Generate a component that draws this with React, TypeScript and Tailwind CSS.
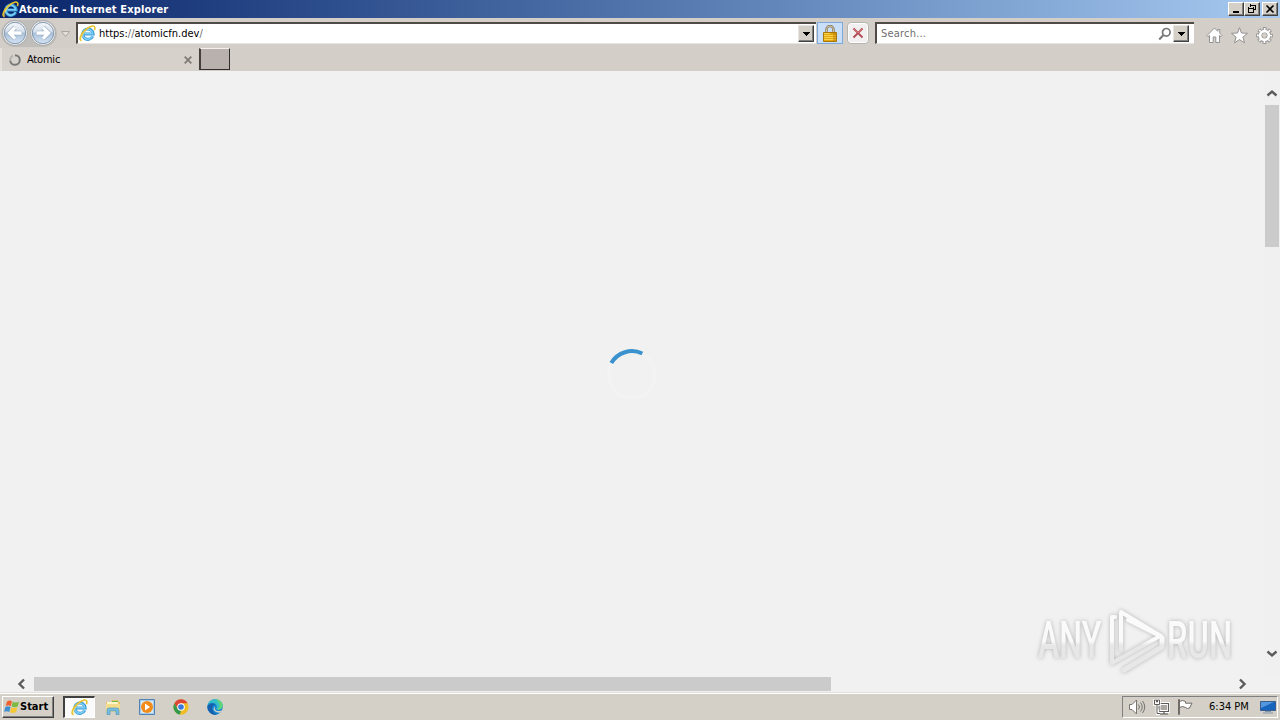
import React from 'react';
import clsx from 'clsx';

interface IconProps {
  size?: number;
}

const IeLogo: React.FC<IconProps> = ({ size = 16 }) => (
  <svg width={size} height={size} viewBox="0 0 16 16" fill="none" className="shrink-0">
    <path d="M12.9 10.6A4.9 4.9 0 1 1 13.3 8.5H5" stroke="#3b9ad6" strokeWidth="2.9" />
    <path d="M12.6 10.4A4.7 4.7 0 1 1 12.9 8.2H5" stroke="#7dd0f5" strokeWidth="1.4" />
    <path d="M2.4 14.9C-.6 14.3 1.5 8.5 6.2 4.4 10.3.8 14.4-.1 14.9 2.2c.2.8 0 1.7-.4 2.6" stroke="#e9c22d" strokeWidth="1.5" />
    <path d="M3 14.2C1.3 12.8 3.4 8.3 7 5" stroke="#ffe476" strokeWidth=".6" />
  </svg>
);

const NavArrow = ({ forward = false }: { forward?: boolean }) => (
  <svg width="28" height="26" viewBox="0 0 28 26" className={clsx('shrink-0', forward && '-scale-x-100')}>
    <defs>
      <linearGradient id="orb" x1="0" y1="0" x2="0" y2="1">
        <stop offset="0" stopColor="#f4f7fa" />
        <stop offset=".45" stopColor="#d5dfeb" />
        <stop offset=".5" stopColor="#a9bfd8" />
        <stop offset="1" stopColor="#d5e5f5" />
      </linearGradient>
    </defs>
    <circle cx="14" cy="13" r="12.5" fill="#f0f1f2" stroke="#a8a8a8" />
    <circle cx="14" cy="13" r="10.7" fill="url(#orb)" stroke="#8296ad" />
    <path d="M20.5 13H9M14 7.5 8.5 13l5.5 5.5" fill="none" stroke="#8fa5bf" strokeWidth="4.6" />
    <path d="M20.5 13H9M14 7.5 8.5 13l5.5 5.5" fill="none" stroke="#fff" strokeWidth="3.4" />
  </svg>
);

const LockIcon = () => (
  <svg width="14" height="17" viewBox="0 0 14 17">
    <path d="M3.5 8V4.5a3.5 3.5 0 0 1 7 0V8" fill="none" stroke="#85775c" strokeWidth="2.4" />
    <path d="M3.5 8V4.5a3.5 3.5 0 0 1 7 0V8" fill="none" stroke="#d4c7a2" strokeWidth="1" />
    <path d="M.5 7.5h13v9H.5z" fill="#e4a70f" stroke="#a97808" />
    <path d="M1 8.5h6M1 10.5h12M1 12.5h12M1 14.5h12" stroke="#f6d24d" />
    <path d="M10 8h3v8h-3z" fill="#bd8104" opacity=".5" />
  </svg>
);

const DropButton = () => (
  <div className="flex h-[17px] w-4 shrink-0 items-center justify-center border border-t-[#e8e5e0] border-l-[#e8e5e0] border-r-[#404040] border-b-[#404040] bg-[#d4d0c8] shadow-[inset_-1px_-1px_0_#808080]">
    <svg width="7" height="4" viewBox="0 0 7 4" shapeRendering="crispEdges">
      <path d="M0 0h7L3.5 4z" />
    </svg>
  </div>
);

const WindowButton = ({ children }: { children: React.ReactNode }) => (
  <div className="flex h-[14px] w-4 items-center justify-center border border-t-white border-l-white border-r-[#404040] border-b-[#404040] bg-[#d4d0c8] shadow-[inset_-1px_-1px_0_#808080]">
    <svg width="12" height="10" viewBox="0 0 12 10" fill="none" stroke="#000" shapeRendering="crispEdges">
      {children}
    </svg>
  </div>
);

const TitleBar = () => (
  <header className="flex h-[18px] items-center bg-linear-to-r from-[#0a246a] to-[#a6caf0] pl-0.5 pr-0.5">
    <IeLogo size={17} />
    <span className="flex-1 pt-px text-[11px] leading-[17px] font-bold tracking-[0.14px] text-white">
      Atomic - Internet Explorer
    </span>
    <div className="flex">
      <WindowButton><path d="M3 8h6" strokeWidth="2" /></WindowButton>
      <WindowButton><path d="M4 1h6M4.5 0v3M9.5 1v5M8 5.5h2M2 4h6M2.5 3v6M7.5 3v6M2 8.5h6" /></WindowButton>
      <div className="ml-0.5">
        <WindowButton><path d="m2.5 1.5 7 7m0-7-7 7" strokeWidth="1.6" shapeRendering="auto" /></WindowButton>
      </div>
    </div>
  </header>
);

const Toolbar = () => (
  <div className="flex h-[30px] items-start pt-0.5 pl-px">
    <div className="flex h-[27px] rounded-full bg-[#c0bebb]">
      <NavArrow />
      <NavArrow forward />
    </div>
    <svg width="9" height="6" viewBox="0 0 9 6" className="mt-[11px] ml-1">
      <path d="M.5.5h8l-4 5z" fill="#e4e1dd" stroke="#aaa6a2" />
    </svg>
    <div className="mt-0.5 ml-[6px] flex h-[22px] w-[740px] items-center border-t-2 border-l-2 border-b border-t-[#504b46] border-l-[#504b46] border-b-[#e8e5e0] bg-white pr-0.5 pl-px">
      <IeLogo size={17} />
      <span className="ml-[3px] flex-1 pt-0.5 text-[11px] text-black">
        https:<span className="text-[#6d6d6d]">//</span>atomicfn.dev<span className="text-[#6d6d6d]">/</span>
      </span>
      <DropButton />
    </div>
    <div className="mt-0.5 ml-px flex h-[22px] w-[26px] items-center justify-center border border-[#7da9dc] bg-[#c9def7]">
      <LockIcon />
    </div>
    <div className="mt-0.5 ml-1 flex h-[22px] w-[22px] items-center justify-center rounded-sm border border-[#b8b4b0] bg-[#f1eff0] shadow-[inset_0_0_0_1px_#fff]">
      <svg width="12" height="12" viewBox="0 0 12 12" fill="none">
        <path d="m1.5 1.5 9 9m0-9-9 9" stroke="#b14a52" strokeWidth="1.8" />
        <path d="m1.5 1.5 4.5 4.5 4.5-4.5" stroke="#df7982" strokeWidth=".8" />
      </svg>
    </div>
    <div className="mt-0.5 ml-[6px] flex h-[22px] w-[319px] items-center border-t-2 border-l-2 border-b border-t-[#504b46] border-l-[#504b46] border-b-[#e8e5e0] bg-white pr-[5px] pl-1">
      <span className="flex-1 pt-0.5 text-[11px] tracking-[0.2px] text-[#707070]">Search...</span>
      <svg width="14" height="14" viewBox="0 0 14 14" fill="none" stroke="#777" className="mr-px">
        <circle cx="8.3" cy="5.3" r="3.8" strokeWidth="1.7" />
        <path d="m5.5 8-4.3 4.5" strokeWidth="2" />
      </svg>
      <DropButton />
    </div>
    <div className="mt-[7px] ml-3 flex gap-2 text-[#939191]">
      <svg width="17" height="17" viewBox="0 0 17 17" fill="#fff" stroke="currentColor">
        <path d="M8.5 1 1 8.5l1 1.2 1.5-1.2v7h3.7V10h2.6v5.5h3.7v-7L15 9.7l1-1.2-2.2-2.2V2.5h-2v1.8z" />
      </svg>
      <svg width="17" height="17" viewBox="0 0 17 17" fill="#fff" stroke="currentColor">
        <path d="m8.5.7 2 5.3 6 .3-4.6 3.8 1.6 5.7-5-3.2-5 3.2 1.6-5.7L.5 6.3l6-.3z" />
      </svg>
      <svg width="17" height="17" viewBox="0 0 17 17" fill="none">
        <circle cx="8.5" cy="8.5" r="6.6" stroke="currentColor" strokeWidth="3.6" strokeDasharray="3.4 1.78" strokeDashoffset="1.7" />
        <circle cx="8.5" cy="8.5" r="4.5" stroke="currentColor" strokeWidth="4.2" />
        <circle cx="8.5" cy="8.5" r="6.6" stroke="#fff" strokeWidth="2" strokeDasharray="1.8 3.38" strokeDashoffset=".9" />
        <circle cx="8.5" cy="8.5" r="4.4" stroke="#fff" strokeWidth="2.7" />
      </svg>
    </div>
  </div>
);

const TabStrip = () => (
  <div className="flex h-[23px]">
    <div className="flex h-full w-[198px] items-center border-l-2 border-[#e4e0dc] bg-[#d7d1cb] pl-[7px]">
      <svg width="12" height="12" viewBox="0 0 12 12" fill="none">
        <path d="M6 1.2A4.8 4.8 0 1 1 1.2 6.5" stroke="#777" strokeWidth="2" />
        <path d="M1.2 6A4.8 4.8 0 0 1 4 1.7" stroke="#b5b1ad" strokeWidth="2" />
      </svg>
      <span className="ml-1.5 flex-1 pt-0.5 text-[11px] tracking-[-0.2px] text-black">Atomic</span>
      <svg width="8" height="8" viewBox="0 0 8 8" className="mr-1.5">
        <path d="m.7.7 6.6 6.6m0-6.6L.7 7.3" stroke="#817b76" strokeWidth="1.8" />
      </svg>
    </div>
    <div className="ml-px h-[22px] w-[31px] border border-t-[#f3f0ed] border-l-2 border-l-[#45403d] border-r-[#302d2b] border-b-[#302d2b] bg-[#b9b1ad]" />
  </div>
);

const chevrons = {
  up: 'm1.5 6.5 4.5-4 4.5 4',
  down: 'm1.5 1.5 4.5 4 4.5-4',
  left: 'M8 1.5 3.5 6 8 10.5',
  right: 'M3 1.5 7.5 6 3 10.5',
};

const Chevron = ({ dir }: { dir: keyof typeof chevrons }) => (
  <svg
    width={dir === 'up' || dir === 'down' ? 12 : 11}
    height={dir === 'up' || dir === 'down' ? 9 : 12}
    className="shrink-0"
    fill="none"
    stroke="#5b5b5b"
    strokeWidth="2.4"
  >
    <path d={chevrons[dir]} />
  </svg>
);

const Watermark = () => (
  <svg
    width="210"
    height="74"
    viewBox="0 0 210 74"
    className="absolute right-[35px] bottom-[14px] drop-shadow-[0_0_2px_rgba(0,0,0,0.26)]"
  >
    <defs>
      <linearGradient id="mark" x1="0" y1="0" x2="0" y2="74" gradientUnits="userSpaceOnUse">
        <stop offset=".5" stopColor="#fafafa" />
        <stop offset=".56" stopColor="#e7e7e7" />
      </linearGradient>
      {/* same split as the mark, measured from the letters' baseline */}
      <linearGradient id="letters" x1="0" y1="-54" x2="0" y2="20" gradientUnits="userSpaceOnUse">
        <stop offset=".5" stopColor="#fafafa" />
        <stop offset=".56" stopColor="#e7e7e7" />
      </linearGradient>
    </defs>
    <g fill="url(#letters)" className="font-['Roboto','Liberation_Sans_Narrow',sans-serif] text-[51px] font-medium">
      <text transform="translate(3 54) scale(.63 1)">ANY</text>
      <text transform="translate(132 54) scale(.64 1)">RUN</text>
    </g>
    <g fill="none" stroke="url(#mark)" strokeWidth="4" strokeLinejoin="round" strokeLinecap="round">
      <path d="M86 46V8l40 24" />
      <path d="M80 13h-3v46l48-27-32-16" />
      <path d="m89 66 38-23v-9" strokeWidth="5" />
    </g>
  </svg>
);

const PageView = () => (
  <main className="relative flex flex-1 flex-col bg-[#f1f1f1]">
    <div className="flex flex-1">
      <div className="flex flex-1 items-center justify-center pt-0.5">
        <svg width="52" height="52" viewBox="0 0 52 52" fill="none" strokeWidth="4">
          <circle cx="26" cy="26" r="23" stroke="#f3f3f3" />
          <path d="M5.3 14A24 24 0 0 1 36.3 4.5" stroke="#3992ce" />
        </svg>
      </div>
      <div className="flex w-4 flex-col items-center bg-[#f0f0f0] pt-[18px] pb-[17px]">
        <Chevron dir="up" />
        <div className="mt-[7px] h-[142px] w-[14px] bg-[#cbcbcb]" />
        <div className="flex-1" />
        <Chevron dir="down" />
      </div>
    </div>
    <div className="flex h-[16px] items-center pr-[32px] pl-4">
      <Chevron dir="left" />
      <div className="ml-[7px] h-[14px] w-[797px] bg-[#cbcbcb]" />
      <div className="flex-1" />
      <Chevron dir="right" />
    </div>
    <Watermark />
  </main>
);

const WindowsFlag = () => (
  <svg width="16" height="16" viewBox="0 0 16 16">
    <path d="M3 2.5Q6 .5 8 2.3L6.8 7.2Q4.3 5.5 1.7 7z" fill="#ef602d" />
    <path d="M8.8 2.8q3 1.4 6.2-.2l-1.3 4.8Q10.5 9 7.6 7.5z" fill="#7cba43" />
    <path d="M1.4 8q2.7-1.5 5.1.2l-1.3 4.7Q2.8 11.5.1 12.8z" fill="#3f8fd0" />
    <path d="M7.3 8.4q3 1.4 6.1-.1l-1.3 4.8Q9 14.8 6 13.3z" fill="#f5c735" />
  </svg>
);

const FolderIcon = () => (
  <svg width="16" height="16" viewBox="0 0 16 16">
    <path d="M1 3h5l1-2h6l1 2h1v10H1z" fill="#e8c65f" />
    <path d="M2 3h11v3H2z" fill="#fff5c7" />
    <path d="M1 5h14v8H1z" fill="#f3dd8d" />
    <path d="M7 2h6v1H7z" fill="#6db55a" />
    <path d="M2 15.5V11q0-2 2-2h8q2 0 2 2v4.5h-3V12H5v3.5z" fill="#75bce0" stroke="#4a90b8" strokeWidth=".6" />
  </svg>
);

const MediaIcon = () => (
  <svg width="16" height="16" viewBox="0 0 16 16">
    <path d="M.5.5h15v15H.5z" fill="#a9cce9" stroke="#4f83b8" />
    <path d="M2 2h12v12H2z" fill="#d9e9f4" />
    <circle cx="8" cy="8" r="6" fill="#f28b18" />
    <path d="m6 4.5 5 3.5-5 3.5z" fill="#fff" />
  </svg>
);

const ChromeIcon = () => (
  <svg width="16" height="16" viewBox="0 0 16 16">
    <circle cx="8" cy="8" r="7.6" fill="#efbd24" />
    <path d="M1.4 4.2A7.6 7.6 0 0 1 14.6 4.2H8L5 10z" fill="#dd4537" />
    <path d="M1.4 4.2 4.7 10 8 12l-1 3.5A7.6 7.6 0 0 1 1.4 4.2z" fill="#34984d" />
    <path d="m6.7 15.5 4.7-6 .2 5.2q-2.3 1.2-4.9.8z" fill="#efbd24" />
    <circle cx="8" cy="8" r="3.8" fill="#fff" />
    <circle cx="8" cy="8" r="2.8" fill="#3978db" />
  </svg>
);

const EdgeIcon = () => (
  <svg width="16" height="16" viewBox="0 0 16 16">
    <circle cx="8" cy="8" r="7.7" fill="#1685cf" />
    <path d="M.5 7C1.2 2.7 4.4.3 8 .3c4.4 0 7.7 3 7.7 6.3 0 2.5-2 4.2-4.4 4.2-2 0-2.7-.7-1.8-1.7C11 7 8.5 3.8 5 3.8 3 3.8 1.5 5 .5 7z" fill="#35bfc8" />
    <path d="M8 .3c4.4 0 7.7 3 7.7 6.3 0 2.5-2 4.2-4.4 4.2l-1-.1c4-2.7 2.3-7.8-2.3-10.4z" fill="#60d47a" />
    <path d="M5.4 7.5c-1 3 .8 6.8 4.6 7.9A7.7 7.7 0 0 1 .3 8c.8-3.2 5.5-5 8.2-2-1.5-.3-2.6.4-3.1 1.5z" fill="#155fad" />
    <path d="M8 7.4c-1.4 3.8 2.8 5.7 6.4 4.2.5-.2.8 0 .5.4l-1 1.5C8 14.5 4.5 9.7 8 7.4z" fill="#d4d0c8" />
  </svg>
);

const quickLaunch = [
  { name: 'explorer', Icon: FolderIcon },
  { name: 'media', Icon: MediaIcon },
  { name: 'chrome', Icon: ChromeIcon },
  { name: 'edge', Icon: EdgeIcon },
];

const Taskbar = () => (
  <footer className="flex h-7 items-start border-t border-[#e2dfda] bg-[#d4d0c8] pt-[3px] shadow-[inset_0_1px_0_#fff]">
    <div className="ml-0.5 flex h-[22px] w-[52px] items-center border border-t-white border-l-white border-r-[#404040] border-b-[#404040] pl-px shadow-[inset_-1px_-1px_0_#808080]">
      <WindowsFlag />
      <span className="pt-px text-[11px] font-bold text-black">Start</span>
    </div>
    <div className="ml-[9px] flex h-[22px] w-8 items-center justify-center border-t-2 border-l-2 border-r border-b border-t-[#404040] border-l-[#404040] border-r-white border-b-white bg-[#fafafa]">
      <IeLogo size={17} />
    </div>
    <div className="mt-[3px] ml-[10px] flex gap-[18px]">
      {quickLaunch.map(({ name, Icon }) => (
        <Icon key={name} />
      ))}
    </div>
    <div className="mr-0.5 ml-auto flex h-[22px] w-[156px] items-center border border-t-[#808080] border-l-[#808080] border-r-white border-b-white pr-px pl-[6px]">
      <svg width="17" height="16" viewBox="0 0 17 16" fill="none" stroke="#77736f">
        <path d="M.5 5.5H3L7.5 1v14L3 10.5H.5z" fill="#fff" />
        <path d="M9.5 5.5q2 2.5 0 5M11.5 3.5q3.5 4.5 0 9M13.5 2q4.5 6 0 12" />
      </svg>
      <svg width="17" height="16" viewBox="0 0 17 16" fill="none" stroke="#5f5b58" className="ml-[7px]">
        <path d="M6 4.5h9.5v8H6z" fill="#aaa6a2" stroke="#fff" strokeWidth="3" />
        <path d="M6 4.5h9.5v8H6zM7 15h8M11 13v2" strokeWidth="1.2" />
        <path d="M1.5 1v4.5h5V1H4.5v2h-1V1zM4 6v9h3" fill="#fff" stroke="#fff" strokeWidth="2.5" />
        <path d="M1.5 1v4.5h5V1H4.5v2h-1V1zM4 6v8.5h3" />
      </svg>
      <svg width="16" height="16" viewBox="0 0 16 16" fill="#fff" stroke="#706c68" className="ml-[7px]">
        <path d="M1.5.5h1v15h-1zM2.5 2.5q3-2 6 0v1.7h6.5L12.5 9q-2 1.2-4-.5-3-2-6 0z" />
      </svg>
      <span className="ml-4 pt-px text-[11px] whitespace-nowrap text-black">6:34 PM</span>
      <svg width="16" height="14" viewBox="0 0 16 14" className="ml-auto">
        <path d="M.5 1.5h15v9H.5z" fill="#1764bd" stroke="#3a5f8f" />
        <path d="M1 2h13L1 8z" fill="#5597df" />
        <path d="M5 11.5h6M3 13h10" stroke="#8295ac" />
      </svg>
    </div>
  </footer>
);

const App: React.FC = () => (
  <div className="flex h-[720px] w-[1280px] flex-col overflow-hidden bg-[#d4cec8] font-['DejaVu_Sans_Condensed','DejaVu_Sans',sans-serif]">
    <TitleBar />
    <Toolbar />
    <TabStrip />
    <PageView />
    <Taskbar />
  </div>
);

export default App;
